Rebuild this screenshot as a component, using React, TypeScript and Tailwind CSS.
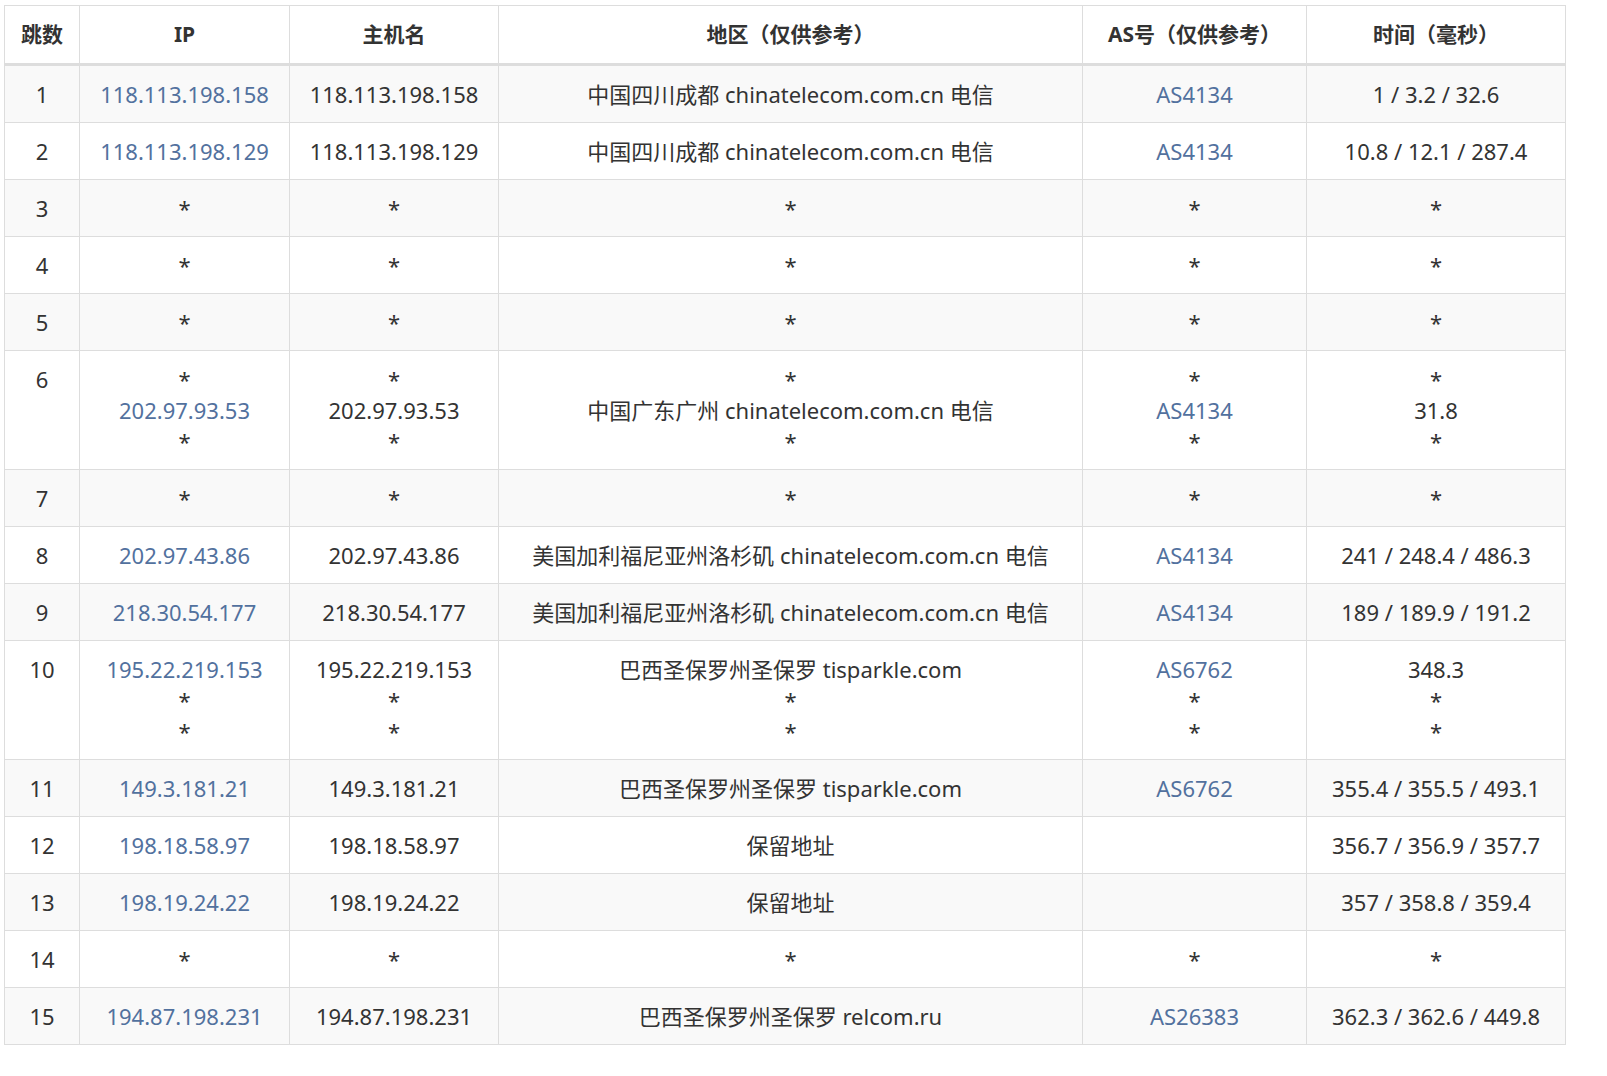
const rows: [string, string[], string[], string[], string[], string[]][] = [
  ["1", ["118.113.198.158"], ["118.113.198.158"], ["中国四川成都 chinatelecom.com.cn 电信"], ["AS4134"], ["1 / 3.2 / 32.6"]],
  ["2", ["118.113.198.129"], ["118.113.198.129"], ["中国四川成都 chinatelecom.com.cn 电信"], ["AS4134"], ["10.8 / 12.1 / 287.4"]],
  ["3", ["*"], ["*"], ["*"], ["*"], ["*"]],
  ["4", ["*"], ["*"], ["*"], ["*"], ["*"]],
  ["5", ["*"], ["*"], ["*"], ["*"], ["*"]],
  ["6", ["*", "202.97.93.53", "*"], ["*", "202.97.93.53", "*"], ["*", "中国广东广州 chinatelecom.com.cn 电信", "*"], ["*", "AS4134", "*"], ["*", "31.8", "*"]],
  ["7", ["*"], ["*"], ["*"], ["*"], ["*"]],
  ["8", ["202.97.43.86"], ["202.97.43.86"], ["美国加利福尼亚州洛杉矶 chinatelecom.com.cn 电信"], ["AS4134"], ["241 / 248.4 / 486.3"]],
  ["9", ["218.30.54.177"], ["218.30.54.177"], ["美国加利福尼亚州洛杉矶 chinatelecom.com.cn 电信"], ["AS4134"], ["189 / 189.9 / 191.2"]],
  ["10", ["195.22.219.153", "*", "*"], ["195.22.219.153", "*", "*"], ["巴西圣保罗州圣保罗 tisparkle.com", "*", "*"], ["AS6762", "*", "*"], ["348.3", "*", "*"]],
  ["11", ["149.3.181.21"], ["149.3.181.21"], ["巴西圣保罗州圣保罗 tisparkle.com"], ["AS6762"], ["355.4 / 355.5 / 493.1"]],
  ["12", ["198.18.58.97"], ["198.18.58.97"], ["保留地址"], [""], ["356.7 / 356.9 / 357.7"]],
  ["13", ["198.19.24.22"], ["198.19.24.22"], ["保留地址"], [""], ["357 / 358.8 / 359.4"]],
  ["14", ["*"], ["*"], ["*"], ["*"], ["*"]],
  ["15", ["194.87.198.231"], ["194.87.198.231"], ["巴西圣保罗州圣保罗 relcom.ru"], ["AS26383"], ["362.3 / 362.6 / 449.8"]],
];

function Lines({ items, link }: { items: string[]; link?: boolean }) {
  return (
    <>
      {items.map((t, i) => (
        <div key={i} className={"h-[31px] whitespace-nowrap " + (link && t !== "*" ? "text-[#52719e]" : "")}>
          {t === "" ? "\u00a0" : t}
        </div>
      ))}
    </>
  );
}

export default function App() {
  const cell = "border border-[#dddddd] px-1 pt-[13px] pb-[12px] text-center align-top leading-[31px]";
  return (
    <div className="bg-white w-[1607px] h-[1076px] pt-[5px] pl-[4px]" style={{ fontFamily: '"Noto Sans", "Noto Sans CJK SC", sans-serif' }}>
      <table className="border-collapse text-[22px] text-[#333333] table-fixed w-[1561px]">
        <colgroup>
          <col className="w-[75px]" />
          <col className="w-[210px]" />
          <col className="w-[209px]" />
          <col className="w-[584px]" />
          <col className="w-[224px]" />
          <col className="w-[259px]" />
        </colgroup>
        <thead>
          <tr>
            {["跳数", "IP", "主机名", "地区（仅供参考）", "AS号（仅供参考）", "时间（毫秒）"].map((h) => (
              <th key={h} className="border border-[#dddddd] border-b-[3px] h-[59px] text-[21px] font-bold text-center align-middle">{h}</th>
            ))}
          </tr>
        </thead>
        <tbody>
          {rows.map((r, i) => (
            <tr key={r[0]} className={i % 2 === 0 ? "bg-[#f9f9f9]" : "bg-white"}>
              <td className={cell}>{r[0]}</td>
              <td className={cell}><Lines items={r[1]} link /></td>
              <td className={cell}><Lines items={r[2]} /></td>
              <td className={cell}><Lines items={r[3]} /></td>
              <td className={cell}><Lines items={r[4]} link /></td>
              <td className={cell}><Lines items={r[5]} /></td>
            </tr>
          ))}
        </tbody>
      </table>
    </div>
  );
}
